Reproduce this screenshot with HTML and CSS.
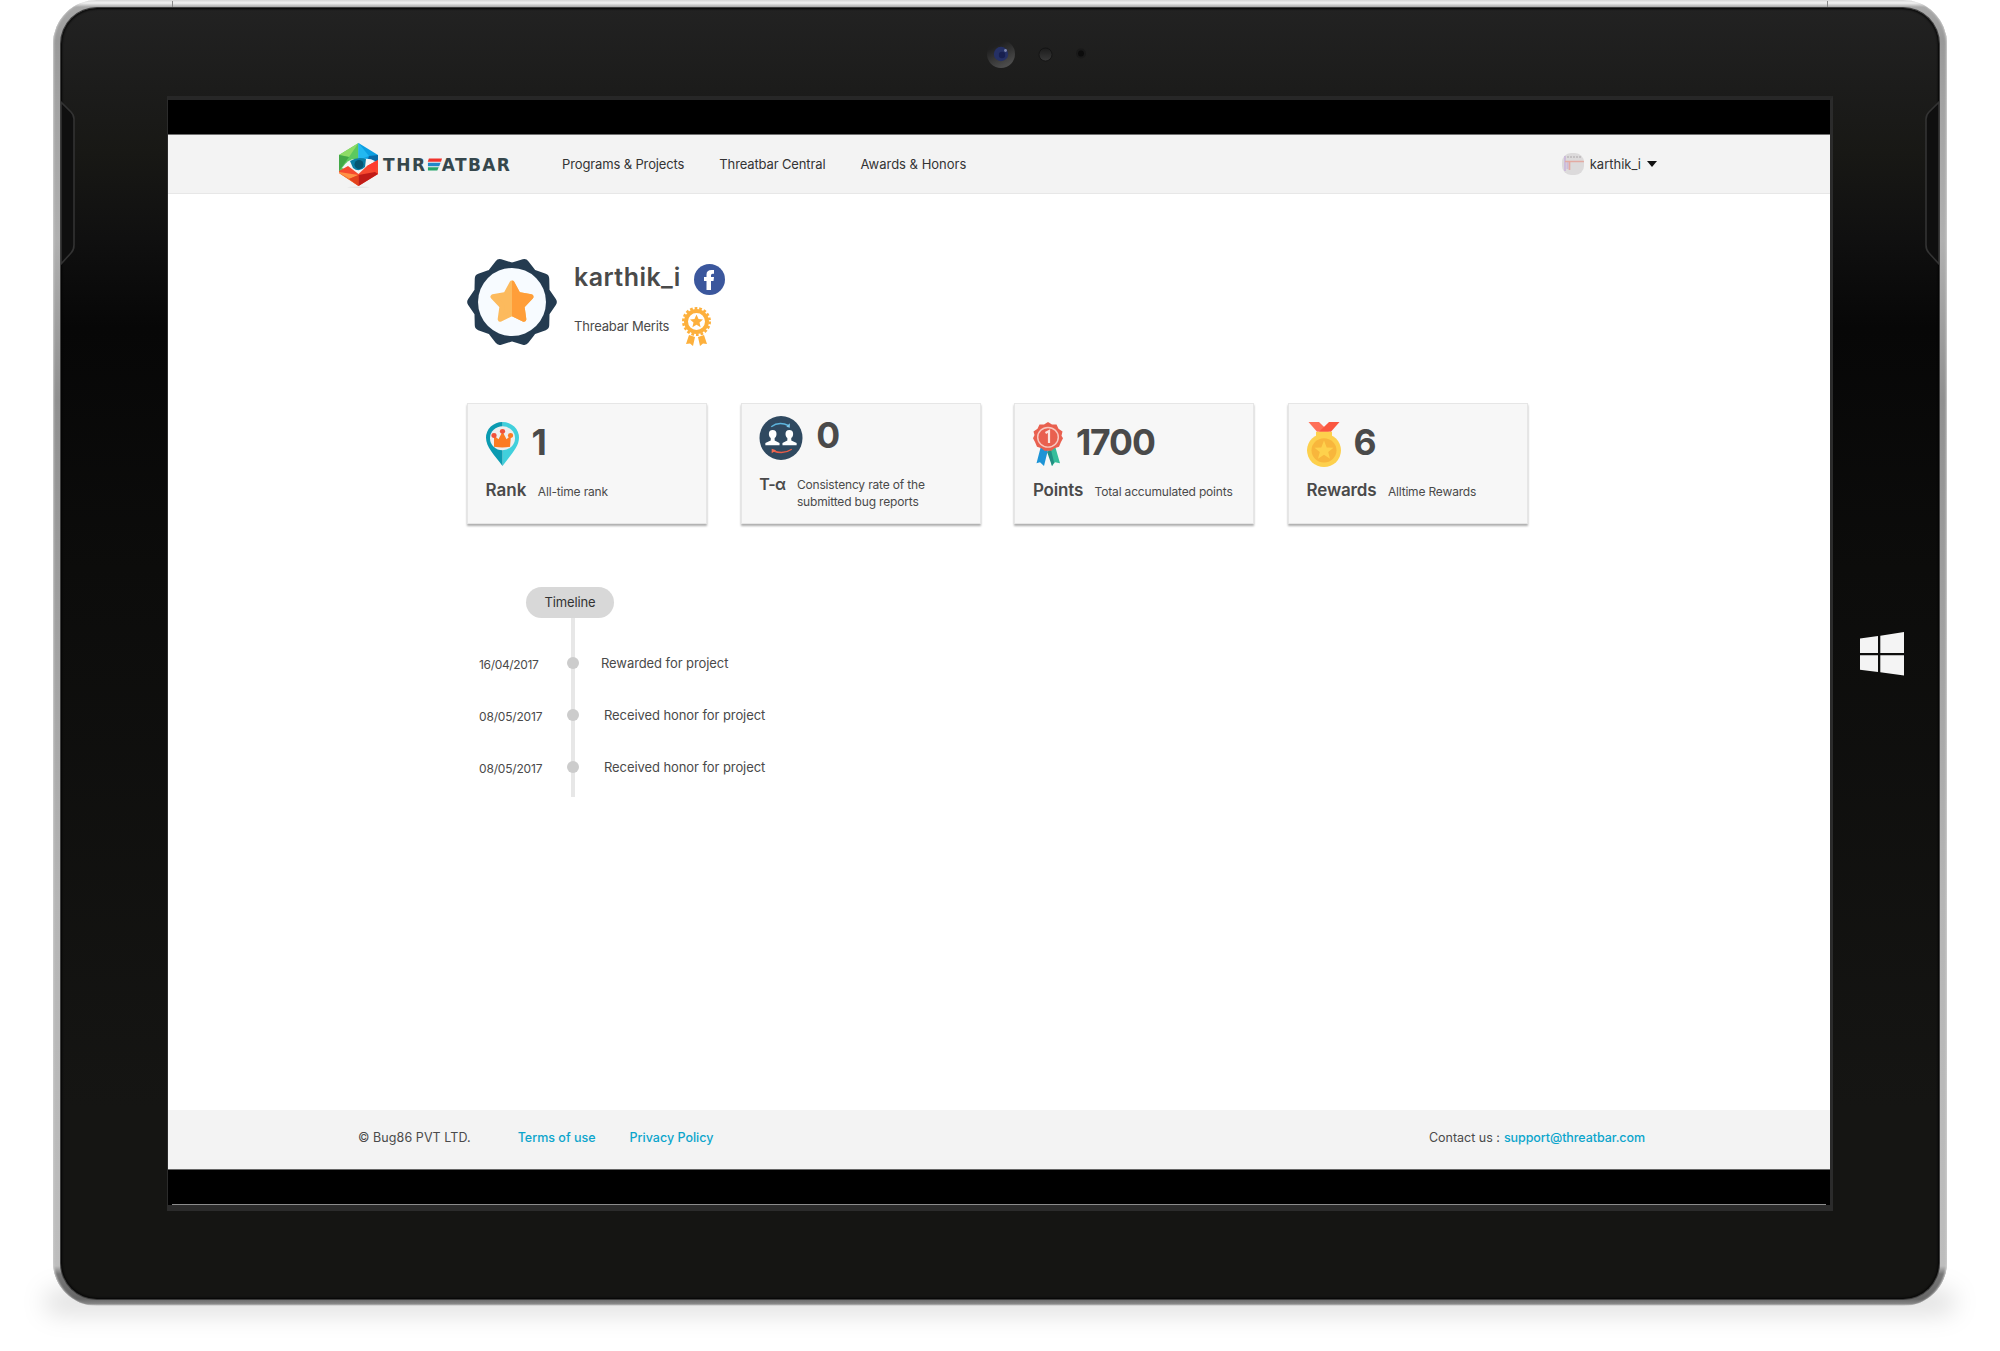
FILE: index.html
```html
<!DOCTYPE html>
<html lang="en">
<head>
<meta charset="utf-8">
<title>Threatbar – karthik_i</title>
<link rel="stylesheet" href="styles.css">
</head>
<body>
<div class="device">
  <i class="seam seam-left"></i><i class="seam seam-right"></i>
  <div class="bezel">
    <svg class="camera" viewBox="0 0 110 34">
      <defs><linearGradient id="ring" x1="0" y1="0" x2="0.5" y2="1"><stop offset=".3" stop-color="#202020"/><stop offset="1" stop-color="#4c4c4c"/></linearGradient>
      <linearGradient id="sensor" x1="0" y1="0" x2="0" y2="1"><stop offset="0" stop-color="#1c1c1c"/><stop offset="1" stop-color="#393939"/></linearGradient></defs>
      <circle cx="15" cy="16" r="14" fill="url(#ring)"/><circle cx="15" cy="16" r="7.2" fill="#253064"/><circle cx="16" cy="17" r="3.2" fill="#18204f"/><circle cx="19.5" cy="12.500" r="1.400" fill="#7d87b0"/>
      <circle cx="59.500" cy="16.500" r="6.500" fill="url(#sensor)" stroke="#101010" stroke-width=".7"/>
      <circle cx="95" cy="15.500" r="4" fill="#0c0c0c" stroke="#191919" stroke-width="2"/>
    </svg>
    <svg class="vent vent-left" viewBox="0 0 15 164"><path d="M0 1 L10 11 Q13 14 13 18 V144 Q13 149 10 152 L0 163Z" fill="#0f0f0f" stroke="#333" stroke-width="1.600"/></svg>
    <svg class="vent vent-right" viewBox="0 0 15 164"><path d="M0 1 L10 11 Q13 14 13 18 V144 Q13 149 10 152 L0 163Z" fill="#0f0f0f" stroke="#333" stroke-width="1.600"/></svg>
    <svg class="windows" viewBox="0 0 44 44"><g fill="#f4f4f4"><path d="M0 6.500 18 4V21H0ZM20.300 3.700 44 0V21H20.300ZM0 23.300H18V40L0 37.800ZM20.300 23.300H44V43.500L20.300 40.200Z"/></g></svg>
    <div class="screen">
      <div class="page">
        <header class="topbar">
          <a class="brand">
            <svg class="brand-mark" viewBox="0 0 39 45" preserveAspectRatio="none">
              <path d="M19.500 0 0 12V29L19.500 20Z" fill="#5cc95f"/><path d="M19.500 0 0 12 10 14Z" fill="#8edb66"/><path d="M0 12 10 14 0 28Z" fill="#43a847"/>
              <path d="M19.500 0 39 12V18L19.500 20Z" fill="#0c9fe2"/><path d="M19.500 0V17L30 13Z" fill="#22b8f1"/><path d="M30 13 39 12V18L28 19Z" fill="#0868a5"/>
              <path d="M3 25Q9 16 16 16L14 24 12 29Z" fill="#f3f6f6"/><path d="M24 16Q31 15 36 18L28 23Z" fill="#f3f6f6"/><path d="M11 18Q19 13 27 16L26 24Q20 30 14 25Z" fill="#0a7fa6"/><circle cx="20" cy="21.500" r="4.500" fill="#075672"/>
              <path d="M0 28 9 23 19.500 31 28 23 39 17V31L19.500 43 0 30Z" fill="#f6492f"/><path d="M0 29 19.500 32 10 36 0 30Z" fill="#ff9146"/><path d="M0 30 10 35 19.500 43Z" fill="#f77a30"/><path d="M39 17 28 23 36 29Z" fill="#ff3c2f"/><path d="M19.500 32 36 29 39 31 19.500 43Z" fill="#c01b17"/><path d="M19.500 32 10 36 19.500 43Z" fill="#e2411d"/>
              <ellipse cx="19.500" cy="44.300" rx="11" ry=".7" fill="#e5e5e5"/>
            </svg>
            <span class="brand-name"><span class="thr">THR</span><svg class="bars" viewBox="0 0 16 13"><path d="M2 0H16L15 3.500H.8Z" fill="#f0322c"/><path d="M1 4.700H14.500L13 8.300H1Z" fill="#2188c9"/><path d="M1 9.500H12.500L11 13H1Z" fill="#25a66a"/></svg><span class="atbar">ATBAR</span></span>
          </a>
          <nav class="nav"><a class="n1">Programs &amp; Projects</a><a class="n2">Threatbar Central</a><a class="n3">Awards &amp; Honors</a></nav>
          <div class="user"><svg class="avatar" viewBox="0 0 22 22"><defs><clipPath id="av"><rect width="22" height="22" rx="9"/></clipPath></defs><g clip-path="url(#av)"><path d="M0 0H22V22H0Z" fill="#dcdadb"/><path d="M2 4H20" stroke="#c4c0c2" stroke-width="2" stroke-dasharray="2 1"/><path d="M3 3V18M5.500 9V16" stroke="#cdbcdb" stroke-width="2"/><path d="M3 8.500H22M7.500 8V17" stroke="#e3aaa2" stroke-width="1.700"/></g></svg><span class="uname">karthik_i</span><i class="caret"></i></div>
        </header>
        <main class="content">
          <section class="profile">
            <svg class="badge" viewBox="-45 -45 90 90"><path d="M39.500 0 32.300 10.500 32 23.200 20 27.500 12.200 37.600 0 34-12.200 37.600-20 27.500-32 23.200-32.300 10.500-39.500 0-32.300-10.500-32-23.200-20-27.500-12.200-37.600 0-34 12.200-37.600 20-27.500 32-23.200 32.300-10.500Z" fill="#243b50" stroke="#243b50" stroke-width="10.500" stroke-linejoin="round"/><circle r="34" fill="#f7fbff"/><g stroke-width="5" stroke-linejoin="round" transform="translate(0 1)"><path d="M0-20 6.200-8.500 19-6.200 10 3.200 11.800 16.200 0 10.500-11.800 16.200-10 3.200-19-6.200-6.200-8.500Z" fill="#fcba5d" stroke="#fcba5d"/><path clip-path="url(#rh)" d="M0-20 6.200-8.500 19-6.200 10 3.200 11.800 16.200 0 10.500-11.800 16.200-10 3.200-19-6.200-6.200-8.500Z" fill="#ff9e39" stroke="#ff9e39"/></g><clipPath id="rh"><path d="M0-30H30V30H0Z"/></clipPath></svg>
            <div class="who">
              <div class="who-row"><h1 class="name">karthik_i</h1><svg class="fb" viewBox="0 0 31 31"><circle cx="15.500" cy="15.500" r="15.500" fill="#3b579d"/><path d="M12.500 26V17H10V13H12.500V10.500Q12.500 6 17.500 6H20V9.700H18.500Q17 9.700 17 11.200V13H20L19.500 17H17V26Z" fill="#fff"/></svg></div>
              <div class="who-row"><span class="merits">Threabar Merits</span><svg class="award" viewBox="0 0 29 39"><g fill="#fdb03c"><path d="M7 28 13 30 11 39 8 36.500 4 37ZM22 28 16 30 18 39 21 36.500 25 37Z"/></g><circle cx="14.500" cy="14.500" r="10.500" fill="#fff" stroke="#fdb03c" stroke-width="4"/><circle cx="14.500" cy="14.500" r="13.200" fill="none" stroke="#fdb03c" stroke-width="2.600" stroke-dasharray="2.700 1.910"/><path d="M14.500 7.500 16.500 12 21 12.500 17.500 15.600 18.600 20.200 14.500 17.800 10.400 20.200 11.500 15.600 8 12.500 12.500 12Z" fill="#fdb03c"/></svg></div>
            </div>
          </section>
          <section class="cards">
            <article class="card">
              <div class="figure"><svg class="i-pin" viewBox="0 0 33 46" preserveAspectRatio="none"><path d="M16.500 0A16.300 16.300 0 0 1 33 16.500C33 26 25 34 16.500 46Z" fill="#41d0dc"/><path d="M16.500 0A16.300 16.300 0 0 0 0 16.500C0 26 8 34 16.500 46Z" fill="#0b9bb1"/><circle cx="16.500" cy="17" r="12.500" fill="#eee"/><path d="M8 14 12.500 18 16.500 10 20.500 18 25 14 24 26Q16.500 27.500 8 26Z" fill="#fb7b22"/><circle cx="8" cy="14" r="2.600" fill="#f0523a"/><circle cx="16.500" cy="9.800" r="2.600" fill="#f0523a"/><circle cx="24.500" cy="14" r="2.600" fill="#fb7b22"/></svg><strong class="num">1</strong></div>
              <div class="label"><b class="l1">Rank</b><span class="d1">All-time rank</span></div>
            </article>
            <article class="card card-tight">
              <div class="figure"><svg class="i-team" viewBox="0 0 44 45"><ellipse cx="22" cy="22.500" rx="22" ry="22.500" fill="#2f4960"/><g fill="#fff"><ellipse cx="13.500" cy="18.500" rx="3.900" ry="4.300"/><path d="M11.500 21H15.500V25L20.500 27.500V30H6V27.500L11.500 25Z"/><ellipse cx="30.500" cy="18.500" rx="3.900" ry="4.300"/><path d="M28.500 21H32.500V25L38 27.500V30H23.500V27.500L28.500 25Z"/></g><path d="M12 11Q20 5 30 10" fill="none" stroke="#5db5dd" stroke-width="1.500"/><path d="M31 7.500V12L27.500 11Z" fill="#7dc9eb"/><path d="M33 34Q24 40 14 35.500" fill="none" stroke="#e85c48" stroke-width="1.500"/><path d="M12.500 38V33.500L17 35Z" fill="#f16b52"/></svg><strong class="num">0</strong></div>
              <div class="label"><b class="l2">T-α</b><span class="d2">Consistency rate of the<br>submitted bug reports</span></div>
            </article>
            <article class="card">
              <div class="figure"><svg class="i-ribbon" viewBox="0 0 30 46" preserveAspectRatio="none"><path d="M8 25 15 29 11 46 7 42 3.500 43Z" fill="#1d94d6"/><path d="M22 25 15 29 19 46 22 42 27 43Z" fill="#36bd9b"/><path d="M14 31 18 29 21 42 19 46Z" fill="#218f83"/><path d="M15 0 19 2.500 23.500 2.500 25.500 7 29.500 10 28.500 14.500 30 17 28 21 26 26 21.500 27.500 18.500 30H11.500L8.500 27.500 4 26 2 21 0 17 1.500 13.500.5 10 4.500 7 6.500 2.500 11 2.500Z" fill="#e9604f"/><circle cx="15" cy="16" r="10.300" fill="none" stroke="#f8c7bf" stroke-width="1.500"/><path d="M12.500 11.500 16 9.500V22" fill="none" stroke="#fce4df" stroke-width="2.200"/></svg><strong class="num n1700">1700</strong></div>
              <div class="label"><b class="l3">Points</b><span class="d3">Total accumulated points</span></div>
            </article>
            <article class="card">
              <div class="figure"><svg class="i-medal" viewBox="0 0 34 46" preserveAspectRatio="none"><path d="M1.500 0H12L22 10H10Z" fill="#ff7058"/><path d="M22 0H32.500L24 10H12Z" fill="#fa5740"/><path d="M9 10H25V18H9Z" fill="#fdd04d"/><circle cx="17" cy="29" r="17" fill="#fdd04d"/><circle cx="17" cy="29" r="12.500" fill="#f8b63c"/><path d="M17 19 19.700 26 26.500 26.300 21.200 30.600 23 37.500 17 33.600 11 37.500 12.800 30.600 7.500 26.300 14.300 26Z" fill="#fed14c"/></svg><strong class="num">6</strong></div>
              <div class="label"><b class="l4">Rewards</b><span class="d4">Alltime Rewards</span></div>
            </article>
          </section>
          <section class="timeline">
            <h2 class="pill">Timeline</h2>
            <ul class="events">
              <li><time class="t1">16/04/2017</time><i class="dot"></i><span class="e1">Rewarded for project</span></li>
              <li><time class="t2">08/05/2017</time><i class="dot"></i><span class="e2">Received honor for project</span></li>
              <li><time class="t2">08/05/2017</time><i class="dot"></i><span class="e2">Received honor for project</span></li>
            </ul>
          </section>
        </main>
        <footer class="footer"><span class="f1">© Bug86 PVT LTD.</span><a class="f2">Terms of use</a><a class="f3">Privacy Policy</a><span class="contact"><span class="f4">Contact us :</span><a class="f5">support@threatbar.com</a></span></footer>
      </div>
    </div>
  </div>
</div>
</body>
</html>
```
FILE: styles.css
```css
* { box-sizing: border-box; }
body { margin: 0; width: 2000px; height: 1351px; overflow: hidden; background: #fff; font-family: Inter, "Noto Sans", sans-serif; color: #4a4a4a; }
h1, h2, ul { margin: 0; padding: 0; font-weight: inherit; }
svg { display: block; flex: none; }
.device { position: relative; width: 1894px; height: 1306px; margin-left: 53px; padding: 8px; border-radius: 44px; background: linear-gradient(180deg, #d8d8d8 0, #f2f2f2 3px, #a8a8a8 7px, #999 40px, #a2a2a2 100px, #b0b0b0 240px, #909090 400px, #b5b5b5 900px, #bdbdbd 1266px, #777 1274px, #666 1299px, #888 1304px, #eee 1306px); box-shadow: inset 2px 0 2px -1px #ccc, inset -2px 0 2px -1px #ccc; }
.device::before { content: ""; position: absolute; z-index: -1; left: -8px; right: -8px; bottom: -8px; height: 24px; border-radius: 12px; background: rgba(0, 0, 0, .13); filter: blur(12px); }
.seam { position: absolute; top: 1px; width: 1px; height: 6px; background: #888; }
.seam-left { left: 119px; }
.seam-right { right: 119px; }
.bezel { position: relative; height: 1291px; padding: 88px 106px; border-radius: 36px; box-shadow: 0 0 0 1px #3c3c3c, inset 0 0 2px 1px #050505; background: linear-gradient(180deg, #222 0, #1c1c1b 80px, #181815 145px, #101010 230px, #070707 320px, #0c0c0b 560px, #151513 1100px, #151513 100%); }
.camera { position: absolute; left: 925px; top: 30px; width: 110px; height: 34px; }
.vent { position: absolute; top: 93px; width: 15px; height: 164px; }
.vent-left { left: 0; }
.vent-right { right: 0; transform: scaleX(-1); }
.windows { position: absolute; left: 1799px; top: 624px; width: 44px; height: 44px; }
.screen { width: 1666px; height: 1115px; padding: 35px 0; background: #000; border: 0 solid #2b2b2b; border-width: 4px 3px 6px 1px; border-top-color: #272727; }
.page { display: flex; flex-direction: column; height: 1034px; background: #fff; box-shadow: 0 -1px 0 #707070, 0 1px 0 #666, 0 39px 0 -4px #000, 0 40px 0 -4px #8c8c8c; }
.topbar { height: 59px; display: flex; align-items: center; padding: 0 173px 0 171px; background: #f3f3f3; border-bottom: 1px solid #e7e7e7; font-size: 13px; color: #333; }
.brand { display: flex; align-items: center; width: 223px; }
.brand-mark { width: 39px; height: 45px; margin-top: 3px; }
.brand-name { display: flex; align-items: center; margin: 1px 0 0 5px; font: 700 17px/20px "DejaVu Sans", sans-serif; color: #36474c; }
.thr { letter-spacing: 1.600px; }
.atbar { letter-spacing: 1.400px; }
.bars { width: 15px; height: 13px; }
.nav { display: flex; gap: 35px; }
.nav a { white-space: nowrap; }
.n1, .n2 { letter-spacing: -.130px; }
.user { display: flex; align-items: center; margin-left: auto; }
.avatar { width: 22px; height: 22px; }
.uname { margin-left: 6px; }
.caret { margin-left: 6px; border: 5px solid transparent; border-top: 6px solid #111; border-bottom: 0; }
.content { flex: 1; padding: 63px 0 0 299px; }
.profile { display: flex; height: 90px; }
.badge { width: 90px; height: 90px; }
.who { margin-left: 17px; padding-top: 7px; }
.who-row { display: flex; align-items: center; height: 31px; }
.who-row + .who-row { height: 39px; margin-top: 12px; }
.name { margin-top: -5px; font-size: 25px; font-weight: 600; line-height: 30px; letter-spacing: .450px; }
.fb { width: 31px; height: 31px; margin-left: 13px; }
.merits { margin-top: -2px; font-size: 13px; letter-spacing: -.200px; }
.award { width: 29px; height: 39px; margin-left: 13px; }
.cards { display: flex; gap: 33.700px; margin-top: 56px; }
.card { width: 240px; height: 121px; padding: 18px 0 0 17.500px; background: #f7f7f7; border: 1px solid #e6e6e6; box-shadow: 0 2px 2px rgba(0, 0, 0, .32); }
.card-tight { padding-top: 12px; }
.figure { display: flex; height: 44px; align-items: center; }
.num { margin-top: -3px; font-size: 35.500px; line-height: 44px; font-weight: 700; }
.card-tight .num { margin-top: -5px; }
.n1700 { letter-spacing: -1.100px; }
.i-pin { width: 33px; height: 44px; margin-right: 13px; }
.i-team { width: 44px; height: 44px; margin-right: 13px; }
.i-ribbon { width: 30px; height: 44px; margin-right: 13px; }
.i-medal { width: 34px; height: 45px; margin-right: 13px; }
.label { display: flex; align-items: baseline; gap: 11.500px; margin-top: 13px; white-space: nowrap; }
.label b { font-size: 17px; line-height: 22px; font-weight: 600; }
.label span { font-size: 12px; line-height: 17px; letter-spacing: -.170px; }
.label .l2 { font-size: 16px; letter-spacing: -.600px; }
.label .l3, .label .l4 { letter-spacing: -.170px; }
.label .d2 { position: relative; top: -1px; }
.timeline { margin-top: 63px; }
.pill { width: 88px; height: 31px; margin-left: 59px; border-radius: 16px; background: #d8d8d8; font-size: 13px; line-height: 31px; letter-spacing: -.120px; text-align: center; color: #333; }
.events { height: 179px; padding-top: 19px; list-style: none; background: linear-gradient(#e7e7e7, #e7e7e7) 104px 0 / 4px 179px no-repeat; }
.events li { display: flex; align-items: center; height: 52px; padding-left: 12px; font-size: 13px; white-space: nowrap; }
.events time { width: 88px; font-size: 12px; padding-top: 2px; }
.t1 { letter-spacing: -.330px; }
.t2 { letter-spacing: -.180px; }
.dot { width: 12px; height: 12px; border-radius: 50%; background: #ccc; }
.e1, .e2 { letter-spacing: -.080px; }
.e1 { margin-left: 22px; }
.e2 { margin-left: 25px; }
.footer { display: flex; align-items: center; height: 59px; padding: 0 185px 4px 190px; background: #f3f3f3; font-size: 12.500px; }
.footer a { color: #0ba5cc; font-weight: 500; }
.f1 { letter-spacing: .080px; }
.f2 { margin-left: 47px; }
.f3 { margin-left: 34px; }
.f5 { letter-spacing: -.080px; }
.contact { display: flex; gap: 4px; margin-left: auto; }
```
